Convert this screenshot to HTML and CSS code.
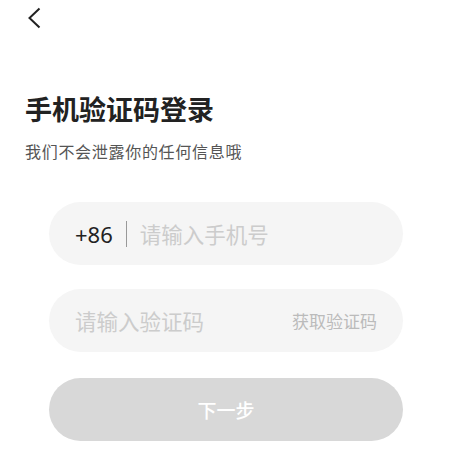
FILE: index.html
```html
<!DOCTYPE html>
<html>
<head>
    <title>手机验证码登录</title>
    <link rel="stylesheet" href="styles.css">
</head>
<body>
    <div class="topBar">
        <svg class="backIcon" width="14" height="22" viewBox="0 0 14 22">
            <polyline points="12.5,1.5 2.5,11 12.5,20.5" fill="none" stroke="#222" stroke-width="2" />
        </svg>
    </div>
    <div class="header">
        <h1 class="title">手机验证码登录</h1>
        <p class="subtitle">我们不会泄露你的任何信息哦</p>
    </div>
    <div class="form">
        <div class="field">
            <span class="prefix">+86</span>
            <span class="divider"></span>
            <span class="placeholder">请输入手机号</span>
        </div>
        <div class="field">
            <span class="placeholder">请输入验证码</span>
            <span class="getCode">获取验证码</span>
        </div>
        <div class="nextButton">下一步</div>
    </div>
</body>
</html>
```

FILE: styles.css
```css
body {
    margin: 0;
    width: 450px;
    height: 456px;
    background-color: #fff;
    font-family: "Noto Sans CJK SC", sans-serif;
    color: #222;
    overflow: hidden;
}
.topBar {
    height: 36px;
    padding: 7px 0 0 27px;
    box-sizing: border-box;
}
.backIcon {
    display: block;
}
.header {
    padding: 55px 0 0 25px;
}
.title {
    margin: 0;
    font-size: 27px;
    line-height: 36px;
    font-weight: 700;
    color: #222;
}
.subtitle {
    margin: 12px 0 0 0;
    font-size: 16px;
    line-height: 24px;
    letter-spacing: 0.7px;
    color: #555;
}
.form {
    display: flex;
    flex-direction: column;
    gap: 24px;
    margin: 39px 47px 0 49px;
}
.field {
    display: flex;
    align-items: center;
    height: 63px;
    padding: 0 26px;
    border-radius: 32px;
    background-color: #f5f5f5;
}
.prefix {
    font-family: "Noto Sans", sans-serif;
    font-size: 22px;
    color: #222;
}
.divider {
    width: 1px;
    height: 26px;
    margin: 0 13px 0 13px;
    background-color: #999;
}
.placeholder {
    flex: 1;
    font-size: 21.5px;
    color: #ccc;
}
.getCode {
    font-size: 17px;
    color: #bbb;
}
.nextButton {
    display: flex;
    align-items: center;
    justify-content: center;
    height: 63px;
    margin-top: 2px;
    border-radius: 32px;
    background-color: #d8d8d8;
    color: #fff;
    font-size: 19px;
    font-weight: 500;
}
```
